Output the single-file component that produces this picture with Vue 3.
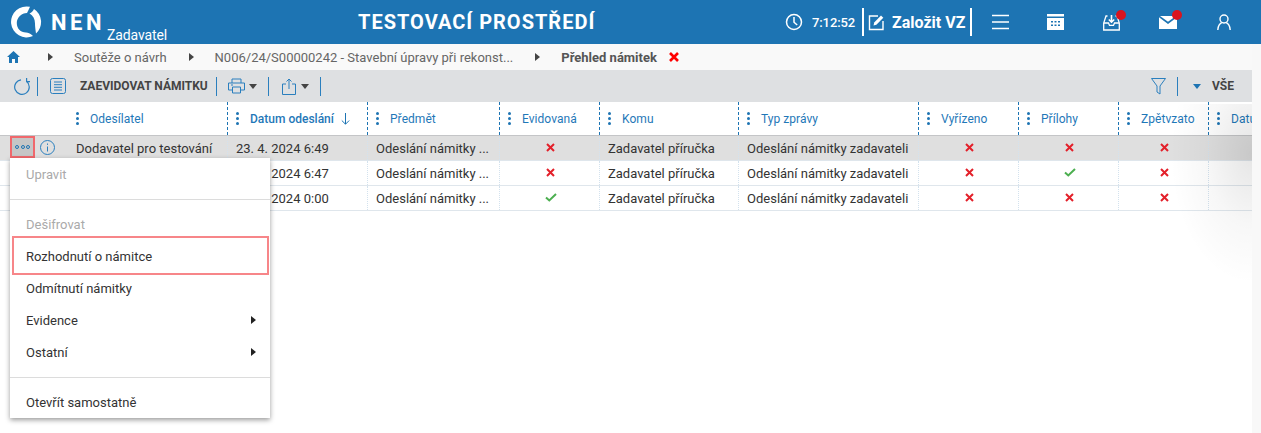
<script setup>
const cols = [
  { t: 'Odesílatel', w: 227, first: true },
  { t: 'Datum odeslání', w: 140, sort: true },
  { t: 'Předmět', w: 132 },
  { t: 'Evidovaná', w: 100 },
  { t: 'Komu', w: 139 },
  { t: 'Typ zprávy', w: 180 },
  { t: 'Vyřízeno', w: 100 },
  { t: 'Přílohy', w: 100 },
  { t: 'Zpětvzato', w: 90 },
  { t: 'Datum', w: 44 },
]
const rows = [
  { sender: 'Dodavatel pro testování', date: '23. 4. 2024 6:49', ev: 0, pr: 0, active: true },
  { sender: '', date: '23. 4. 2024 6:47', ev: 0, pr: 1 },
  { sender: '', date: '23. 4. 2024 0:00', ev: 1, pr: 0 },
]
</script>

<template>
  <div class="page">
    <header class="top">
      <div class="logo">
        <svg width="32" height="32" viewBox="0 0 32 32" class="logo-mark">
          <path fill="#fff" d="M20 .8A15.500 15.500 0 1 0 23 30C20 27 18 26.500 16 26.500 10.500 26.500 6.800 22.500 6.800 17 6.800 11.500 11.500 7.200 17 7 18 5 19 3 20 .8z" />
          <path fill="#fff" d="M24 3A15.500 15.500 0 0 1 26 27.500C25.500 24 25 20 25 17.500 25 13 23 9.500 19.500 7.500 21.500 6.800 23 5 24 3z" />
        </svg>
        <span class="nen">NEN</span>
        <span class="role">Zadavatel</span>
      </div>
      <div class="title">TESTOVACÍ PROSTŘEDÍ</div>
      <div class="top-right">
        <svg class="clock" width="18" height="18" viewBox="0 0 18 18" fill="none" stroke="#fff" stroke-width="1.5">
          <circle cx="9" cy="9" r="7.500" />
          <path d="M9 4v5.200l3.200 2.800" />
        </svg>
        <span class="time">7:12:52</span>
        <div class="create">
          <svg width="17" height="17" viewBox="0 0 17 17" fill="none" stroke="#fff" stroke-width="1.4">
            <path d="M10 2H1.500v13.500H15V7" />
            <path d="M5.500 11.500l.7-3L13 1.500l2.300 2.300-6.900 7z" fill="#fff" stroke="none" />
          </svg>
          <b>Založit VZ</b>
        </div>
        <svg class="ic i-menu" width="17" height="16" viewBox="0 0 17 16" stroke="#fff" stroke-width="1.5">
          <path d="M0 1.500h17M0 8h17M0 14.500h17" />
        </svg>
        <svg class="ic i-cal" width="17" height="16" viewBox="0 0 17 16">
          <path fill="#fff" d="M0 0h17v2.500H0zM0 4h17v12H0z" />
          <path fill="#1d74b3" d="M4 7h2v1.600H4zM7.500 7h2v1.600h-2zM11 7h2v1.600h-2zM4 10.500h2v1.600H4zM7.500 10.500h2v1.600h-2zM11 10.500h2v1.600h-2z" />
        </svg>
        <div class="ic i-in">
          <svg width="17" height="17" viewBox="0 0 17 17" fill="none" stroke="#fff" stroke-width="1.3">
            <path d="M4.500 2H3L.7 9v7h15.600V9L14 2h-1.500" />
            <path d="M1 9h4.500l1 2.400h4l1-2.400H16" />
            <path d="M8.500 1v7M5.800 5.500l2.700 2.700 2.700-2.700" stroke-width="1.600" />
          </svg>
          <i class="dot"></i>
        </div>
        <div class="ic i-mail">
          <svg width="18" height="13" viewBox="0 0 18 13">
            <path fill="#fff" d="M0 1.300l9 6.700 9-6.700V13H0z" />
            <path fill="#fff" d="M1 0h16L9 5.800z" />
          </svg>
          <i class="dot"></i>
        </div>
        <svg class="ic i-user" width="14" height="16" viewBox="0 0 14 16" fill="none" stroke="#fff" stroke-width="1.4">
          <circle cx="7" cy="5" r="4" />
          <path d="M.8 16c0-4 2.400-7 4.200-7.400M13.200 16c0-4-2.400-7-4.200-7.400" />
        </svg>
      </div>
    </header>

    <nav class="crumbs">
      <svg class="home" width="13" height="12" viewBox="0 0 13 12"><path fill="#1d74b3" d="M6.500 0L13 6h-2v6H8V8H5v4H2V6H0z" /></svg>
      <i class="tri tri-a"></i><span class="c1">Soutěže o návrh</span>
      <i class="tri tri-b"></i><span class="c2">N006/24/S00000242 - Stavební úpravy při rekonst...</span>
      <i class="tri tri-c"></i><b class="c3">Přehled námitek</b>
      <svg class="close" width="10" height="10" viewBox="0 0 10 10" stroke="#f00" stroke-width="2.600"><path d="M1 1l8 8M9 1l-8 8" /></svg>
    </nav>

    <div class="tools">
      <svg class="t-refresh" width="17" height="17" viewBox="0 0 17 17" fill="none" stroke="#2a7fbe" stroke-width="1.200">
        <path d="M7 1.800A7.300 7.300 0 1 0 12.500 3.300M12.600 0V3.600H16" />
      </svg>
      <i class="sep s1"></i>
      <svg class="t-list" width="16" height="16" viewBox="0 0 16 16" fill="none" stroke="#2a7fbe" stroke-width="1">
        <rect x=".5" y=".5" width="15" height="15" rx="2" />
        <path d="M4 4h8M4 6.700h8M4 9.300h8M4 12h8" />
      </svg>
      <b class="t-label">ZAEVIDOVAT NÁMITKU</b>
      <i class="sep s2"></i>
      <svg class="t-print" width="17" height="16" viewBox="0 0 17 16" fill="none" stroke="#2a7fbe" stroke-width="1">
        <path d="M4 5V1h9v4M4 12H.5V5h16v7H13" />
        <path d="M4.500 9h8v6h-8zM3 7h2" />
      </svg>
      <i class="caret dark c-a"></i>
      <i class="sep s3"></i>
      <svg class="t-share" width="14" height="17" viewBox="0 0 14 17" fill="none" stroke="#2a7fbe" stroke-width="1">
        <path d="M4 6H.5v10.500h13V6H10M7 11V1M4.500 3.500L7 1l2.500 2.500" />
      </svg>
      <i class="caret dark c-b"></i>
      <i class="sep s4"></i>
      <div class="spacer"></div>
      <svg class="t-filter" width="15" height="17" viewBox="0 0 15 17" fill="none" stroke="#2a7fbe" stroke-width="1">
        <path d="M.5 .5h14L9 8v8l-3-2V8z" />
      </svg>
      <i class="sep s5"></i>
      <i class="caret blue"></i>
      <b class="t-all">VŠE</b>
    </div>

    <div class="table">
      <div class="thead">
        <div v-for="c in cols" :key="c.t" class="th" :class="{ first: c.first, sorted: c.sort }" :style="{ width: c.w + 'px' }">
          <span class="dots"><i></i><i></i><i></i></span>
          <span class="th-t">{{ c.t }}</span>
          <svg v-if="c.sort" class="sort" width="9" height="12" viewBox="0 0 9 12" fill="none" stroke="#1d74b3" stroke-width="1">
            <path d="M4.500 0v11M.8 7.500l3.700 3.700 3.700-3.700" />
          </svg>
        </div>
      </div>
      <div v-for="(r, i) in rows" :key="i" class="tr" :class="{ active: r.active }">
        <div class="td c-0">
          <template v-if="r.active">
            <span class="more"><i></i><i></i><i></i></span>
            <svg class="info" width="15" height="15" viewBox="0 0 15 15" fill="none" stroke="#2a7fbe">
              <circle cx="7.500" cy="7.500" r="7" />
              <path d="M7.500 6.500v5M7.500 3.500v1.400" />
            </svg>
          </template>
          <span class="sender">{{ r.sender }}</span>
        </div>
        <div class="td c-1">{{ r.date }}</div>
        <div class="td c-2">Odeslání námitky ...</div>
        <div class="td c-3 mid">
          <svg v-if="r.ev" class="ok" width="12" height="9" viewBox="0 0 12 9" fill="none" stroke="#4caf50" stroke-width="2"><path d="M1 4.500l3.300 3L11 1" /></svg>
          <svg v-else class="no" width="9" height="9" viewBox="0 0 9 9" fill="none" stroke="#e3202a" stroke-width="2"><path d="M1 1l7 7M8 1l-7 7" /></svg>
        </div>
        <div class="td c-4">Zadavatel příručka</div>
        <div class="td c-5">Odeslání námitky zadavateli</div>
        <div class="td c-6 mid">
          <svg class="no" width="9" height="9" viewBox="0 0 9 9" fill="none" stroke="#e3202a" stroke-width="2"><path d="M1 1l7 7M8 1l-7 7" /></svg>
        </div>
        <div class="td c-7 mid">
          <svg v-if="r.pr" class="ok" width="12" height="9" viewBox="0 0 12 9" fill="none" stroke="#4caf50" stroke-width="2"><path d="M1 4.500l3.300 3L11 1" /></svg>
          <svg v-else class="no" width="9" height="9" viewBox="0 0 9 9" fill="none" stroke="#e3202a" stroke-width="2"><path d="M1 1l7 7M8 1l-7 7" /></svg>
        </div>
        <div class="td c-8 mid">
          <svg class="no" width="9" height="9" viewBox="0 0 9 9" fill="none" stroke="#e3202a" stroke-width="2"><path d="M1 1l7 7M8 1l-7 7" /></svg>
        </div>
        <div class="td c-9"></div>
      </div>
    </div>

    <div class="fade"></div>
    <div class="strip"></div>

    <div class="menu">
      <div class="mi off">Upravit</div>
      <hr class="h1" />
      <div class="mi off">Dešifrovat</div>
      <div class="mi hl">Rozhodnutí o námitce</div>
      <div class="mi">Odmítnutí námitky</div>
      <div class="mi arrow">Evidence<i class="tri"></i></div>
      <div class="mi arrow">Ostatní<i class="tri"></i></div>
      <hr class="h2" />
      <div class="mi">Otevřít samostatně</div>
    </div>
  </div>
</template>

<style>
html, body { margin: 0; background: #fff; overflow: hidden; }
</style>

<style scoped>
.page {
  position: relative;
  width: 1261px;
  height: 433px;
  overflow: hidden;
  font-family: Roboto, "Liberation Sans", sans-serif;
  font-size: 13px;
  color: #333;
  background: #fff;
}
i { display: block; font-style: normal; }

.top {
  height: 44px;
  background: #1d74b3;
  color: #fff;
  display: flex;
  align-items: center;
}
.logo {
  width: 358px;
  display: flex;
  align-items: flex-start;
  height: 44px;
  flex: none;
}
.logo-mark { margin: 6px 0 0 10px; flex: none; }
.nen {
  margin: 9px 0 0 9px;
  font-size: 22px;
  font-weight: 700;
  line-height: 28px;
  letter-spacing: 3.500px;
}
.role {
  margin: 26px 0 0 2px;
  font-size: 14px;
  line-height: 18px;
  letter-spacing: -.1px;
}
.title {
  width: 427px;
  flex: none;
  font-size: 20px;
  font-weight: 700;
  letter-spacing: 1px;
}
.top-right { display: flex; align-items: center; height: 44px; }
.time { margin-left: 9px; width: 50px; font-size: 13px; font-weight: 500; letter-spacing: -.1px; }
.create {
  display: flex;
  align-items: center;
  gap: 7px;
  height: 28px;
  width: 110px;
  box-sizing: border-box;
  padding-left: 4px;
  border-left: 2px solid #fff;
  border-right: 2px solid #fff;
  font-size: 16px;
  white-space: nowrap;
}
.ic { flex: none; position: relative; }
.i-menu { margin-left: 20px; }
.i-cal { margin-left: 38px; }
.i-in { margin-left: 39px; width: 17px; height: 17px; }
.i-mail { margin-left: 39px; width: 18px; height: 13px; }
.i-user { margin-left: 40px; }
.ic svg { display: block; }
.dot {
  position: absolute;
  width: 10px;
  height: 10px;
  border-radius: 50%;
  background: #d9141e;
  left: 13px;
  top: -4px;
}
.i-mail .dot { top: -6px; }

.crumbs {
  height: 26px;
  background: #f9f9f9;
  display: flex;
  align-items: center;
  color: #666;
}
.home { margin-left: 7px; }
.tri {
  width: 0;
  height: 0;
  border-left: 5px solid #444;
  border-top: 4px solid transparent;
  border-bottom: 4px solid transparent;
}
.tri-a { margin-left: 28px; }
.c1 { margin-left: 21px; }
.tri-b { margin-left: 22px; }
.c2 { margin-left: 21px; }
.tri-c { margin-left: 22px; }
.c3 { margin-left: 21px; font-weight: 700; color: #555; }
.close { margin-left: 12px; }

.tools {
  height: 32px;
  background: #dee0e2;
  display: flex;
  align-items: center;
}
.sep { width: 1px; height: 19px; background: #2a7fbe; flex: none; }
.t-refresh { margin-left: 14px; }
.s1 { margin-left: 6px; }
.t-list { margin-left: 12px; }
.t-label { margin-left: 14px; font-size: 12px; color: #444; white-space: nowrap; }
.s2 { margin-left: 8px; }
.t-print { margin-left: 11px; }
.caret { width: 0; height: 0; border-left: 4px solid transparent; border-right: 4px solid transparent; border-top: 5px solid #444; flex: none; }
.c-a { margin-left: 4px; }
.s3 { margin-left: 11px; }
.t-share { margin-left: 13px; }
.c-b { margin-left: 5px; }
.s4 { margin-left: 11px; }
.spacer { flex: 1; }
.t-filter { margin-right: 11px; }
.s5 { margin-right: 15px; }
.caret.blue { border-top-color: #1d74b3; }
.t-all { margin: 0 27px 0 11px; font-size: 12px; color: #444; }

.table { width: 1252px; overflow: hidden; }
.thead { display: flex; height: 33px; background: #fff; border-bottom: 1px solid #c4c5c7; }
.th {
  flex: none;
  box-sizing: border-box;
  display: flex;
  align-items: center;
  height: 33px;
  padding-left: 8px;
  border-left: 1px dashed #1d74b3;
  color: #1f78b8;
  font-size: 12px;
  letter-spacing: .05px;
  white-space: nowrap;
}
.th.sorted { font-weight: 500; letter-spacing: 0; }
.th.first { border-left: 0; padding-left: 76px; }
.dots { display: flex; flex-direction: column; gap: 2px; margin-right: 11px; }
.dots i { width: 3px; height: 3px; border-radius: 50%; background: #1d74b3; }
.sort { margin-left: 7px; }

.tr { display: flex; height: 25px; box-sizing: border-box; border-bottom: 1px solid #dfe6ec; }
.tr.active { background: #dfdfdf; }
.td {
  flex: none;
  box-sizing: border-box;
  height: 24px;
  display: flex;
  align-items: center;
  padding-left: 8px;
  border-left: 1px dotted #d3e2ee;
  white-space: nowrap;
}
.c-0 { width: 227px; border-left: 0; position: relative; padding-left: 76px; }
.c-1 { width: 140px; }
.c-2 { width: 132px; }
.c-3 { width: 100px; }
.c-4 { width: 139px; }
.c-5 { width: 180px; }
.c-6 { width: 100px; }
.c-7 { width: 100px; }
.c-8 { width: 90px; }
.c-9 { width: 44px; }
.mid { justify-content: center; padding-left: 2px; padding-bottom: 2px; }
.more {
  position: absolute;
  left: 10px;
  top: 0;
  width: 25px;
  height: 22px;
  box-sizing: border-box;
  background: #c6c6c6;
  border: 2px solid #f0686c;
  display: flex;
  align-items: center;
  justify-content: center;
  gap: 1.500px;
}
.more i { width: 4px; height: 4px; box-sizing: border-box; border: 1px solid #1d74b3; border-radius: 50%; }
.info { position: absolute; left: 40px; top: 4px; }

.fade {
  position: absolute;
  left: 1170px;
  top: 104px;
  width: 82px;
  height: 200px;
  background: radial-gradient(ellipse 82px 130px at 100% 25%, rgba(0, 0, 0, .1), rgba(0, 0, 0, .03) 55%, rgba(0, 0, 0, 0) 100%);
  pointer-events: none;
}
.strip { position: absolute; left: 1252px; top: 44px; width: 9px; height: 389px; background: #f8f8f8; }

.menu {
  position: absolute;
  left: 10px;
  top: 158px;
  width: 260px;
  height: 260px;
  background: #fff;
  box-shadow: 0 2px 5px rgba(0, 0, 0, .4);
  box-sizing: border-box;
  color: #333;
}
.mi {
  height: 32px;
  display: flex;
  align-items: center;
  padding-left: 16px;
  box-sizing: border-box;
  color: #333;
}
.mi.off { color: #aaa; }
hr { margin: 0; border: 0; height: 1px; background: #dcdcdc; }
.h1 { margin: 9px 0 8px; }
.hl {
  height: 39px;
  margin: -4px 1px -3px 2px;
  padding: 1px 0 0 12px;
  border: 2px solid #f78689;
}
.h2 { margin: 9px 0 8px; }
.arrow { position: relative; }
.arrow .tri { position: absolute; right: 14px; top: 12px; border-left-color: #222; }
</style>
